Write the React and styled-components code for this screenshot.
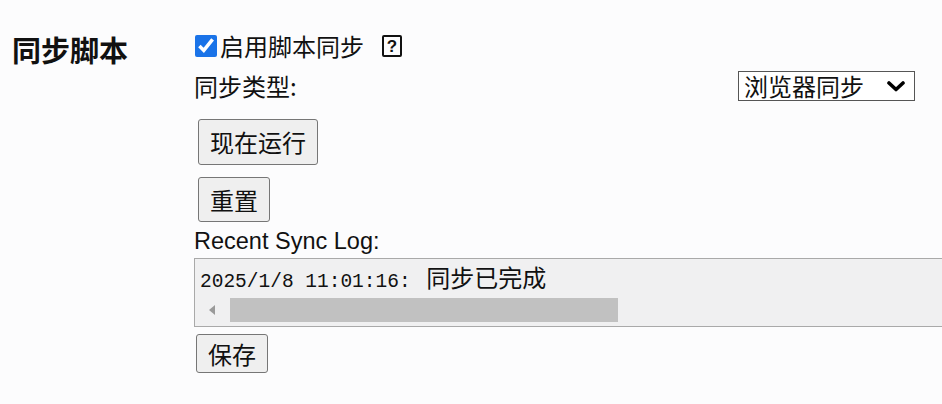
import React from 'react'
import styled, { createGlobalStyle } from 'styled-components'

const GlobalStyle = createGlobalStyle`
  html, body {
    margin: 0;
    background: #fcfcfd;
  }
  body {
    font-family: "Noto Sans CJK SC", sans-serif;
    color: #111;
  }
`

const App = () => (
  <>
    <GlobalStyle />
    <Page>
      <Heading>同步脚本</Heading>
      <Column>
        <CheckRow>
          <Checkbox type="checkbox" defaultChecked />
          <CheckLabel>启用脚本同步</CheckLabel>
          <HelpBox>?</HelpBox>
        </CheckRow>
        <TypeRow>
          <Label>同步类型:</Label>
          <Select>
            <span>浏览器同步</span>
            <svg width="18" height="11" viewBox="0 0 18 11">
              <path d="M2 2 L9 8.5 L16 2" fill="none" stroke="#000" strokeWidth="3.6" strokeLinecap="round" strokeLinejoin="round" />
            </svg>
          </Select>
        </TypeRow>
        <Button $top={18} $left={4} $h={46}>现在运行</Button>
        <Button $top={12} $left={4} $h={45}>重置</Button>
        <LogLabel>Recent Sync Log:</LogLabel>
        <LogBox>
          <LogLine>
            <Mono>2025/1/8 11:01:16: </Mono>
            <LogMsg>同步已完成</LogMsg>
          </LogLine>
          <ScrollTrack>
            <Arrow />
            <Thumb style={{ width: 388 }} />
          </ScrollTrack>
        </LogBox>
        <Button $top={7} $left={2} $h={39}>保存</Button>
      </Column>
    </Page>
  </>
)

export default App

const Page = styled.div`
  display: grid;
  grid-template-columns: 182px 1fr;
  padding: 33px 0 0 12px;
  overflow: hidden;
  height: 404px;
  box-sizing: border-box;
`

const Heading = styled.h2`
  margin: 0;
  font-size: 29px;
  font-weight: 700;
  line-height: 32px;
  letter-spacing: 0;
`

const Column = styled.div`
  display: flex;
  flex-direction: column;
  align-items: flex-start;
  padding-top: 2px;
`

const CheckRow = styled.div`
  display: flex;
  align-items: center;
  height: 22px;
`

const Checkbox = styled.input`
  width: 22px;
  height: 22px;
  margin: 0 3px 0 1px;
  accent-color: #1a73e8;
`

const CheckLabel = styled.span`
  font-size: 24px;
  line-height: 22px;
`

const HelpBox = styled.span`
  display: inline-flex;
  align-items: center;
  justify-content: center;
  width: 16px;
  height: 18px;
  margin-left: 18px;
  border: 2.5px solid #111;
  border-radius: 2px;
  font-family: "Liberation Sans", sans-serif;
  font-size: 17px;
  font-weight: 700;
  line-height: 1;
`

const TypeRow = styled.div`
  display: flex;
  align-items: center;
  justify-content: space-between;
  width: 721px;
  margin-top: 14px;
`

const Label = styled.span`
  font-size: 24px;
  line-height: 28px;
`

const Select = styled.div`
  display: flex;
  align-items: center;
  justify-content: space-between;
  width: 177px;
  height: 30px;
  box-sizing: border-box;
  padding: 0 9px 0 5px;
  border: 1px solid #555;
  background: #fff;
  font-size: 24px;
  line-height: 28px;
`

const Button = styled.button`
  height: ${(p) => p.$h}px;
  margin: ${(p) => p.$top}px 0 0 ${(p) => p.$left}px;
  padding: 0 11px;
  border: 1.5px solid #767676;
  border-radius: 3px;
  background: #efefef;
  color: #111;
  font-family: "Noto Sans CJK SC", sans-serif;
  font-size: 24px;
  line-height: 28px;
`

const LogLabel = styled.div`
  margin-top: 5px;
  font-family: "Liberation Sans", "Noto Sans CJK SC", sans-serif;
  font-size: 23.5px;
  line-height: 28px;
`

const LogBox = styled.div`
  width: 760px;
  height: 69px;
  box-sizing: border-box;
  margin-top: 3px;
  border: 1.5px solid #a9a9a9;
  background: #f0f0f1;
  display: flex;
  flex-direction: column;
`

const LogLine = styled.div`
  padding: 3px 0 0 5px;
  height: 38px;
  flex: none;
  box-sizing: border-box;
  white-space: pre;
  font-size: 24px;
  line-height: 30px;
`

const Mono = styled.span`
  font-family: "Liberation Mono", monospace;
  font-size: 19.5px;
`

const LogMsg = styled.span`
  margin-left: 4px;
`

const ScrollTrack = styled.div`
  display: flex;
  align-items: center;
  flex: none;
  height: 26px;
  padding-left: 14px;
`

const Arrow = styled.span`
  width: 0;
  height: 0;
  border-top: 5px solid transparent;
  border-bottom: 5px solid transparent;
  border-right: 6px solid #9a9a9a;
  margin-right: 15px;
`

const Thumb = styled.span`
  height: 24px;
  background: #c1c1c1;
`
